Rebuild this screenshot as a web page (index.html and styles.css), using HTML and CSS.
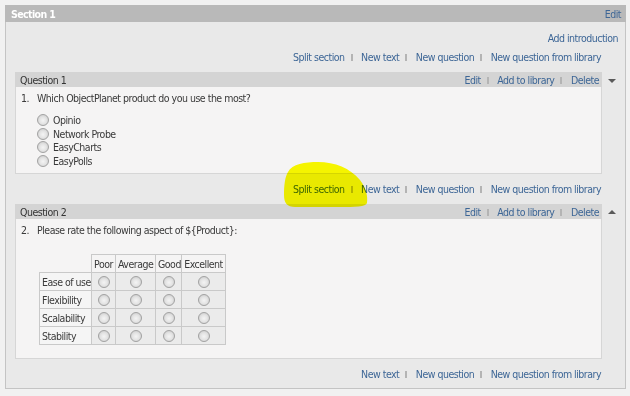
FILE: index.html
```html
<!DOCTYPE html>
<html lang="en">
<head>
  <meta charset="UTF-8">
  <title>Survey editor</title>
  <link rel="stylesheet" href="styles.css">
</head>
<body>

  <div class="page">
    <div class="section">
      <div class="section-head">
        <span class="section-title">Section 1</span>
        <a class="link" href="#">Edit</a>
      </div>

      <div class="section-body">
        <div class="intro"><a class="link" href="#">Add introduction</a></div>

        <div class="actions first">
          <a class="link" href="#">Split section</a><span class="sep"></span>
          <a class="link" href="#">New text</a><span class="sep"></span>
          <a class="link" href="#">New question</a><span class="sep"></span>
          <a class="link" href="#">New question from library</a>
        </div>

        <div class="q-row">
          <div class="question">
            <div class="q-head">
              <span>Question 1</span>
              <span class="q-tools">
                <a class="link" href="#">Edit</a><span class="sep"></span>
                <a class="link" href="#">Add to library</a><span class="sep"></span>
                <a class="link" href="#">Delete</a>
              </span>
            </div>
            <div class="q-body">
              <div class="q-text"><span class="q-num">1.</span>Which ObjectPlanet product do you use the most?</div>
              <ul class="options">
                <li><input type="radio" name="p"> Opinio</li>
                <li><input type="radio" name="p"> Network Probe</li>
                <li><input type="radio" name="p"> EasyCharts</li>
                <li><input type="radio" name="p"> EasyPolls</li>
              </ul>
            </div>
          </div>
          <div class="mover"><span class="arrow down"></span></div>
        </div>

        <div class="actions">
          <a class="link" href="#">Split section</a><span class="sep"></span>
          <a class="link" href="#">New text</a><span class="sep"></span>
          <a class="link" href="#">New question</a><span class="sep"></span>
          <a class="link" href="#">New question from library</a>
        </div>

        <div class="q-row">
          <div class="question">
            <div class="q-head">
              <span>Question 2</span>
              <span class="q-tools">
                <a class="link" href="#">Edit</a><span class="sep"></span>
                <a class="link" href="#">Add to library</a><span class="sep"></span>
                <a class="link" href="#">Delete</a>
              </span>
            </div>
            <div class="q-body">
              <div class="q-text"><span class="q-num">2.</span>Please rate the following aspect of ${Product}:</div>
              <table class="matrix">
                <colgroup>
                  <col class="c-label"><col class="c-poor"><col class="c-avg"><col class="c-good"><col class="c-exc">
                </colgroup>
                <tr>
                  <th class="blank"></th><th>Poor</th><th>Average</th><th>Good</th><th>Excellent</th>
                </tr>
                <tr>
                  <td class="label">Ease of use</td>
                  <td><input type="radio" name="a"></td><td><input type="radio" name="a"></td>
                  <td><input type="radio" name="a"></td><td><input type="radio" name="a"></td>
                </tr>
                <tr>
                  <td class="label">Flexibility</td>
                  <td><input type="radio" name="b"></td><td><input type="radio" name="b"></td>
                  <td><input type="radio" name="b"></td><td><input type="radio" name="b"></td>
                </tr>
                <tr>
                  <td class="label">Scalability</td>
                  <td><input type="radio" name="c"></td><td><input type="radio" name="c"></td>
                  <td><input type="radio" name="c"></td><td><input type="radio" name="c"></td>
                </tr>
                <tr>
                  <td class="label">Stability</td>
                  <td><input type="radio" name="d"></td><td><input type="radio" name="d"></td>
                  <td><input type="radio" name="d"></td><td><input type="radio" name="d"></td>
                </tr>
              </table>
            </div>
          </div>
          <div class="mover"><span class="arrow up"></span></div>
        </div>

        <div class="actions last">
          <a class="link" href="#">New text</a><span class="sep"></span>
          <a class="link" href="#">New question</a><span class="sep"></span>
          <a class="link" href="#">New question from library</a>
        </div>
      </div>
    </div>

    <!-- highlighter mark drawn over the screenshot -->
    <svg class="marker" width="630" height="396" viewBox="0 0 630 396">
      <path d="M288 172 C292 164 305 162 318 162 C335 162 350 168 360 180 C366 188 368 196 367 203 C366 207 355 207 340 207 L295 207 C287 207 284 203 284 195 C284 185 285 177 288 172 Z" fill="#ffff00"/>
    </svg>
  </div>

</body>
</html>
```

FILE: styles.css
```css
body {
  margin: 0;
  background: #f1f1f1;
  font-family: "DejaVu Sans Condensed", "DejaVu Sans", sans-serif;
  font-stretch: condensed;
  font-size: 10.5px;
  letter-spacing: -0.5px;
  color: #3a3a3a;
}

.page {
  position: relative;
  padding: 5px;
  height: 396px;
  box-sizing: border-box;
}

.link {
  color: #3d6696;
  text-decoration: none;
}

.sep {
  display: inline-block;
  width: 2px;
  height: 7px;
  margin: 0 6px;
  background: #b4b4b4;
  vertical-align: 0;
}

.section {
  width: 621px;
  box-sizing: border-box;
  border: 1px solid #c4c4c4;
  border-top: none;
  background: #e9e9e9;
}

.section-head {
  display: flex;
  justify-content: space-between;
  align-items: center;
  height: 17px;
  margin: 0 -1px;
  padding: 0 5px 0 6px;
  background: #b9b9b9;
}

.section-title {
  color: #fff;
  font-weight: bold;
  letter-spacing: -0.6px;
}

.section-body {
  padding: 9px 0 7px 9px;
}

.intro {
  height: 14px;
  line-height: 14px;
  text-align: right;
  padding-right: 7px;
}

.actions {
  width: 587px;
  height: 14px;
  line-height: 14px;
  margin: 8px 0 8px;
  padding-right: 1px;
  box-sizing: border-box;
  text-align: right;
}

.actions.first {
  margin: 5px 0 8px;
}

.actions.last {
  margin: 8px 0 0;
}

.q-row {
  display: flex;
}

.question {
  width: 587px;
  flex: none;
}

.mover {
  flex: 1;
  display: flex;
  justify-content: center;
  padding-top: 6px;
}

.arrow {
  width: 0;
  height: 0;
  border-left: 4px solid transparent;
  border-right: 4px solid transparent;
  margin-right: 3px;
}

.arrow.down {
  border-top: 4px solid #5a5a5a;
  margin-top: 1px;
}

.arrow.up {
  border-bottom: 4px solid #5a5a5a;
}

.q-head {
  display: flex;
  justify-content: space-between;
  align-items: center;
  height: 15px;
  padding: 0 3px 0 5px;
  background: #d4d4d4;
  color: #333;
}

.q-body {
  background: #f5f4f4;
  border: 1px solid #d6d6d6;
  border-top: none;
  padding: 4px 5px 5px 5px;
}

.q-text {
  height: 14px;
  line-height: 14px;
}

.q-num {
  display: inline-block;
  width: 16px;
}

.options {
  list-style: none;
  margin: 8px 0 0 16px;
  padding: 0;
}

.options li {
  display: flex;
  align-items: center;
  gap: 4px;
  height: 13.75px;
}

input[type="radio"] {
  appearance: none;
  width: 12px;
  height: 12px;
  margin: 0;
  border: 1px solid #a2a2a2;
  border-radius: 50%;
  background: radial-gradient(circle at 50% 55%, #f4f4f4 0, #e4e4e4 45%, #c4c4c4 100%);
  box-sizing: border-box;
  vertical-align: middle;
}

.matrix {
  border-collapse: collapse;
  table-layout: fixed;
  width: 186px;
  margin: 17px 0 8px 18px;
}

.c-label { width: 52px; }
.c-poor { width: 24px; }
.c-avg { width: 40px; }
.c-good { width: 26px; }
.c-exc { width: 44px; }

.matrix th,
.matrix td {
  border: 1px solid #c9c9c9;
  height: 17px;
  padding: 0 2px;
  font-weight: normal;
  white-space: nowrap;
  overflow: hidden;
  text-align: center;
}

.matrix th {
  background: #f5f4f4;
}

.matrix th.blank {
  border: none;
  background: transparent;
}

.matrix td {
  background: #ebebeb;
}

.matrix td.label {
  text-align: left;
  background: #f5f5f5;
}

.matrix td input {
  display: block;
  margin: 0 auto;
}

.marker {
  position: absolute;
  left: 0;
  top: 0;
  mix-blend-mode: multiply;
  pointer-events: none;
}
```
